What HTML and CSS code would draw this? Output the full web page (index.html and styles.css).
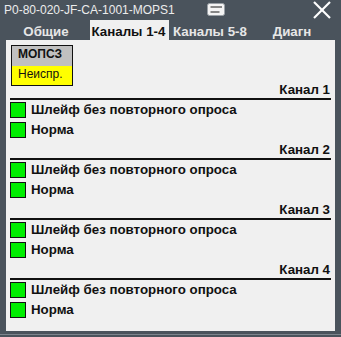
FILE: index.html
```html
<!DOCTYPE html>
<html>
<head>
<meta charset="utf-8">
<link rel="stylesheet" href="styles.css">
</head>
<body>
<div class="window">
  <div class="titlebar">
    <span class="title">P0-80-020-JF-CA-1001-MOPS1</span>
    <svg class="menu-icon" width="18" height="14" viewBox="0 0 18 14">
      <rect x="0.5" y="0.5" width="17" height="12" rx="2" fill="#f4f4f4" stroke="#9aa0a6"/>
      <line x1="3.5" y1="4" x2="15" y2="4" stroke="#3c3c3c" stroke-width="1.2"/>
      <line x1="3.5" y1="9" x2="12.5" y2="9" stroke="#3c3c3c" stroke-width="1.2"/>
    </svg>
    <svg class="close-icon" width="20" height="18" viewBox="0 0 20 18">
      <line x1="2" y1="1" x2="18" y2="17" stroke="#ffffff" stroke-width="2.2"/>
      <line x1="18" y1="1" x2="2" y2="17" stroke="#ffffff" stroke-width="2.2"/>
    </svg>
  </div>
  <div class="tabs">
    <div class="tab">Общие</div>
    <div class="tab active">Каналы 1-4</div>
    <div class="tab">Каналы 5-8</div>
    <div class="tab">Диагн</div>
  </div>
  <div class="panel">
    <div class="device">
      <div class="device-name">МОПСЗ</div>
      <div class="device-state">Неиспр.</div>
    </div>
    <div class="channel first">
      <div class="channel-head">Канал 1</div>
      <div class="row"><span class="led"></span>Шлейф без повторного опроса</div>
      <div class="row"><span class="led"></span>Норма</div>
    </div>
    <div class="channel">
      <div class="channel-head">Канал 2</div>
      <div class="row"><span class="led"></span>Шлейф без повторного опроса</div>
      <div class="row"><span class="led"></span>Норма</div>
    </div>
    <div class="channel">
      <div class="channel-head">Канал 3</div>
      <div class="row"><span class="led"></span>Шлейф без повторного опроса</div>
      <div class="row"><span class="led"></span>Норма</div>
    </div>
    <div class="channel">
      <div class="channel-head">Канал 4</div>
      <div class="row"><span class="led"></span>Шлейф без повторного опроса</div>
      <div class="row"><span class="led"></span>Норма</div>
    </div>
  </div>
  <div class="frame-bottom"></div>
</div>
</body>
</html>
```

FILE: styles.css
```css
html, body {
  margin: 0;
  padding: 0;
}
body {
  background: #4a535c;
  font-family: "Liberation Sans", Arial, sans-serif;
  width: 341px;
  height: 337px;
  overflow: hidden;
}
.window {
  display: flex;
  flex-direction: column;
  height: 337px;
}
.titlebar {
  position: relative;
  height: 18px;
}
.title {
  display: block;
  padding: 2px 0 0 4px;
  font-size: 12px;
  line-height: 16px;
  color: #ececec;
}
.menu-icon {
  position: absolute;
  left: 207px;
  top: 3px;
}
.close-icon {
  position: absolute;
  left: 312px;
  top: 1px;
}
.tabs {
  display: flex;
  padding: 2px 0 0 5px;
  height: 20px;
}
.tab {
  width: 82px;
  box-sizing: border-box;
  padding-top: 4px;
  line-height: 16px;
  font-size: 13.3px;
  font-weight: bold;
  color: #e6e6e6;
  text-align: center;
  white-space: nowrap;
}
.tab.active {
  width: 79px;
  margin-left: 3px;
  text-indent: -2px;
  color: #111;
  background: #f0f0f0;
}
.panel {
  flex: 1;
  margin: 0 6px;
  padding: 5px 4px 0 4px;
  background: #f0f0f0;
  color: #111;
}
.device {
  width: 62px;
  box-sizing: border-box;
  margin-left: 1px;
  border: 1px solid #111;
  font-size: 12px;
  line-height: 16px;
}
.device-name {
  background: #c0c0c0;
  font-weight: bold;
  padding: 0 0 4px 6px;
}
.device-state {
  background: #ffff00;
  padding: 0 0 3px 6px;
}
.channel.first {
  margin-top: -6px;
}
.channel-head {
  text-align: right;
  font-size: 13.3px;
  font-weight: bold;
  line-height: 16px;
  padding: 2px 1px 0 0;
  border-bottom: 2px solid #111;
}
.row {
  display: flex;
  align-items: center;
  height: 20px;
  font-size: 13.3px;
  font-weight: bold;
  line-height: 20px;
}
.led {
  width: 16px;
  height: 16px;
  box-sizing: border-box;
  border: 1px solid #111;
  background: #00ee00;
  margin-right: 5px;
}
.frame-bottom {
  height: 6px;
  background: linear-gradient(#4a535c 0 3px, #7c848c 3px 4px, #4a535c 4px);
}
```
